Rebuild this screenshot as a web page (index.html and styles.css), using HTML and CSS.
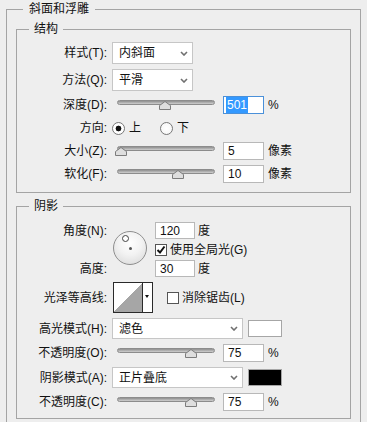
FILE: index.html
```html
<!DOCTYPE html>
<html lang="zh-CN">
<head>
  <!-- 基本信息 -->
  <meta charset="UTF-8">
  <meta name="viewport" content="width=device-width, initial-scale=1.0">
  <title>斜面和浮雕</title>

  <!-- 样式 -->
  <link rel="stylesheet" href="styles.css">
</head>

<body>
  <!-- 外层分组：斜面和浮雕 -->
  <fieldset class="group group-main">
    <legend>斜面和浮雕</legend>

    <!-- 结构 -->
    <fieldset class="group group-sub">
      <legend>结构</legend>
      <div class="rows">
        <div class="row row-select">
          <span class="label">样式(T):</span>
          <div class="select select-short">
            <span>内斜面</span>
            <svg class="chevron" width="8" height="5" viewBox="0 0 8 5"><polyline points="1,1 4,4 7,1"/></svg>
          </div>
        </div>

        <div class="row row-select">
          <span class="label">方法(Q):</span>
          <div class="select select-short">
            <span>平滑</span>
            <svg class="chevron" width="8" height="5" viewBox="0 0 8 5"><polyline points="1,1 4,4 7,1"/></svg>
          </div>
        </div>

        <div class="row">
          <span class="label">深度(D):</span>
          <div class="slider">
            <div class="track"></div>
            <svg class="thumb" style="left: 49%" width="12" height="9" viewBox="0 0 12 9"><polygon points="6,0.5 11.5,4.5 11.5,8.5 0.5,8.5 0.5,4.5"/></svg>
          </div>
          <span class="field focus"><span class="selected">501</span></span>
          <span class="unit">%</span>
        </div>

        <div class="row">
          <span class="label">方向:</span>
          <span class="radio checked"></span>
          <span class="radio-text">上</span>
          <span class="radio radio-second"></span>
          <span class="radio-text">下</span>
        </div>

        <div class="row">
          <span class="label">大小(Z):</span>
          <div class="slider">
            <div class="track"></div>
            <svg class="thumb" style="left: 4%" width="12" height="9" viewBox="0 0 12 9"><polygon points="6,0.5 11.5,4.5 11.5,8.5 0.5,8.5 0.5,4.5"/></svg>
          </div>
          <span class="field">5</span>
          <span class="unit">像素</span>
        </div>

        <div class="row">
          <span class="label">软化(F):</span>
          <div class="slider">
            <div class="track"></div>
            <svg class="thumb" style="left: 62%" width="12" height="9" viewBox="0 0 12 9"><polygon points="6,0.5 11.5,4.5 11.5,8.5 0.5,8.5 0.5,4.5"/></svg>
          </div>
          <span class="field">10</span>
          <span class="unit">像素</span>
        </div>
      </div>
    </fieldset>

    <!-- 阴影 -->
    <fieldset class="group group-sub group-shadow">
      <legend>阴影</legend>
      <div class="rows">
        <!-- 角度与高度 -->
        <div class="angle">
          <span class="label angle-label-top">角度(N):</span>
          <div class="dial">
            <span class="dial-mark"></span>
            <span class="dial-center"></span>
          </div>
          <div class="angle-field angle-field-top">
            <span class="field field-angle">120</span>
            <span class="unit unit-deg">度</span>
          </div>
          <div class="angle-check">
            <span class="check">
              <svg width="10" height="10" viewBox="0 0 10 10"><polyline points="1.5,5 4,7.5 8.5,1.5"/></svg>
            </span>
            <span class="check-text">使用全局光(G)</span>
          </div>
          <span class="label angle-label-bottom">高度:</span>
          <div class="angle-field angle-field-bottom">
            <span class="field field-angle">30</span>
            <span class="unit unit-deg">度</span>
          </div>
        </div>

        <!-- 光泽等高线 -->
        <div class="row row-contour">
          <span class="label">光泽等高线:</span>
          <div class="contour">
            <div class="contour-preview"></div>
            <div class="contour-arrow"></div>
          </div>
          <span class="check check-empty check-contour"></span>
          <span class="check-text">消除锯齿(L)</span>
        </div>

        <div class="row row-select">
          <span class="label">高光模式(H):</span>
          <div class="select select-wide">
            <span>滤色</span>
            <svg class="chevron" width="8" height="5" viewBox="0 0 8 5"><polyline points="1,1 4,4 7,1"/></svg>
          </div>
          <span class="swatch swatch-white"></span>
        </div>

        <div class="row">
          <span class="label">不透明度(O):</span>
          <div class="slider">
            <div class="track"></div>
            <svg class="thumb" style="left: 75%" width="12" height="9" viewBox="0 0 12 9"><polygon points="6,0.5 11.5,4.5 11.5,8.5 0.5,8.5 0.5,4.5"/></svg>
          </div>
          <span class="field">75</span>
          <span class="unit">%</span>
        </div>

        <div class="row row-select">
          <span class="label">阴影模式(A):</span>
          <div class="select select-wide">
            <span>正片叠底</span>
            <svg class="chevron" width="8" height="5" viewBox="0 0 8 5"><polyline points="1,1 4,4 7,1"/></svg>
          </div>
          <span class="swatch swatch-black"></span>
        </div>

        <div class="row">
          <span class="label">不透明度(C):</span>
          <div class="slider">
            <div class="track"></div>
            <svg class="thumb" style="left: 75%" width="12" height="9" viewBox="0 0 12 9"><polygon points="6,0.5 11.5,4.5 11.5,8.5 0.5,8.5 0.5,4.5"/></svg>
          </div>
          <span class="field">75</span>
          <span class="unit">%</span>
        </div>
      </div>
    </fieldset>
  </fieldset>
</body>
</html>
```

FILE: styles.css
```css
/* 基本样式 */
body {
  margin: 0;
  background-color: #eeeeee;
  font-family: "Liberation Sans", "Noto Sans CJK SC", sans-serif;
  font-size: 12px;
  line-height: 18px;
  color: #111111;
  overflow: hidden;
}

/* 分组框 */
.group {
  margin: 0;
  padding: 0;
  border: 1px solid #a4a4a4;
  min-width: 0;
  box-sizing: border-box;
}

.group > legend {
  height: 18px;
  line-height: 18px;
}

/* 外层分组 */
.group-main {
  width: 355px;
  margin-left: 6px;
  padding: 2px 9px 12px 9px;
}

.group-main > legend {
  margin-left: 7px;
  padding: 0 6px;
}

/* 子分组 */
.group-sub {
  padding: 4px 0 9px 0;
}

.group-sub > legend {
  margin-left: 12px;
  padding: 0 5px;
}

.group-shadow {
  margin-top: 4px;
  padding: 7px 0 7px 0;
}

/* 行 */
.rows {
  display: flex;
  flex-direction: column;
  gap: 5px;
}

.row {
  display: flex;
  align-items: center;
  height: 18px;
}

.row-select {
  height: 22px;
}

.group-shadow .row-select {
  height: 21px;
}

.label {
  flex-shrink: 0;
  width: 90px;
  margin-right: 5px;
  text-align: right;
  white-space: nowrap;
}

/* 下拉框 */
.select {
  box-sizing: border-box;
  height: 100%;
  display: flex;
  align-items: center;
  justify-content: space-between;
  padding: 0 4px 0 6px;
  background-color: #ffffff;
  border: 1px solid #c6c6c6;
}

.select-short {
  width: 81px;
}

.select-wide {
  width: 131px;
}

.chevron polyline {
  fill: none;
  stroke: #707070;
  stroke-width: 1.6;
}

/* 滑块 */
.slider {
  position: relative;
  flex-shrink: 0;
  width: 98px;
  height: 10px;
  margin: 0 8px 0 5px;
}

.track {
  box-sizing: border-box;
  height: 5px;
  border-radius: 3px;
  border: 1px solid #8c8c8c;
  background: linear-gradient(#8e8e8e, #cfcfcf);
}

.thumb {
  position: absolute;
  top: 1px;
  transform: translateX(-50%);
}

.thumb polygon {
  fill: #dedede;
  stroke: #7c7c7c;
  stroke-width: 1;
}

/* 输入框 */
.field {
  box-sizing: border-box;
  flex-shrink: 0;
  width: 41px;
  height: 18px;
  padding-left: 4px;
  line-height: 16px;
  background-color: #ffffff;
  border: 1px solid #b8b8b8;
}

.field.focus {
  border-color: #4a90d9;
  padding-left: 2px;
}

.selected {
  display: inline-block;
  padding: 0 1px;
  background-color: #3399ff;
  color: #ffffff;
}

.unit {
  margin-left: 4px;
}

/* 单选按钮 */
.radio {
  box-sizing: border-box;
  width: 13px;
  height: 13px;
  border-radius: 50%;
  border: 1px solid #777777;
  background: radial-gradient(circle, #ffffff 0, #f4f4f4 100%);
}

.radio.checked {
  background: radial-gradient(circle, #111111 0, #111111 2.6px, #ffffff 3.2px);
}

.radio-second {
  margin-left: 19px;
}

.radio-text {
  margin-left: 4px;
}

/* 复选框 */
.check {
  box-sizing: border-box;
  display: flex;
  align-items: center;
  justify-content: center;
  flex-shrink: 0;
  width: 12px;
  height: 12px;
  background-color: #ffffff;
  border: 1px solid #555555;
}

.check polyline {
  fill: none;
  stroke: #111111;
  stroke-width: 2;
}

.check-text {
  margin-left: 3px;
  white-space: nowrap;
}

.check-contour {
  margin-left: 14px;
}

/* 角度区域 */
.angle {
  display: grid;
  grid-template-columns: 95px 43px auto;
  grid-template-rows: 17px 11px 17px;
  row-gap: 5px;
  align-items: center;
}

.angle-label-top {
  grid-row: 1;
  grid-column: 1;
}

.angle-label-bottom {
  grid-row: 3;
  grid-column: 1;
}

.dial {
  grid-row: 1 / 4;
  grid-column: 2;
  align-self: start;
  position: relative;
  box-sizing: border-box;
  width: 34px;
  height: 34px;
  margin: 9px 0 0 1px;
  border-radius: 50%;
  border: 1px solid #8e8e8e;
  background: radial-gradient(circle at 50% 35%, #ffffff 0, #f2f2f2 45%, #d6d6d6 100%);
}

.dial-mark {
  position: absolute;
  left: 8px;
  top: 3px;
  box-sizing: border-box;
  width: 7px;
  height: 7px;
  border-radius: 50%;
  border: 1px solid #444444;
  background-color: #ffffff;
}

.dial-center {
  position: absolute;
  left: 15px;
  top: 15px;
  width: 3px;
  height: 3px;
  border-radius: 50%;
  background-color: #555555;
}

.angle-field {
  grid-column: 3;
  display: flex;
  align-items: center;
  height: 17px;
}

.angle-field-top {
  grid-row: 1;
}

.angle-field-bottom {
  grid-row: 3;
}

.field-angle {
  width: 40px;
  height: 17px;
}

.unit-deg {
  margin-left: 3px;
}

.angle-check {
  grid-row: 2;
  grid-column: 3;
  display: flex;
  align-items: center;
}

/* 等高线 */
.row-contour {
  height: 31px;
}

.contour {
  box-sizing: border-box;
  display: flex;
  width: 40px;
  height: 31px;
  margin-left: 1px;
  border: 1px solid #2a2a2a;
  background-color: #ffffff;
}

.contour-preview {
  flex: 1;
  background: linear-gradient(to top left, #a6a6a6 50%, #ffffff 50%);
}

.contour-arrow {
  position: relative;
  width: 9px;
  border-left: 1px solid #2a2a2a;
}

.contour-arrow:after {
  content: '';
  position: absolute;
  left: 2px;
  top: 12px;
  border-left: 2.5px solid transparent;
  border-right: 2.5px solid transparent;
  border-top: 3px solid #111111;
}

/* 颜色块 */
.swatch {
  box-sizing: border-box;
  width: 34px;
  height: 17px;
  margin-left: 5px;
  border: 1px solid #a6a6a6;
}

.swatch-white {
  background-color: #ffffff;
}

.swatch-black {
  background-color: #000000;
}
```
